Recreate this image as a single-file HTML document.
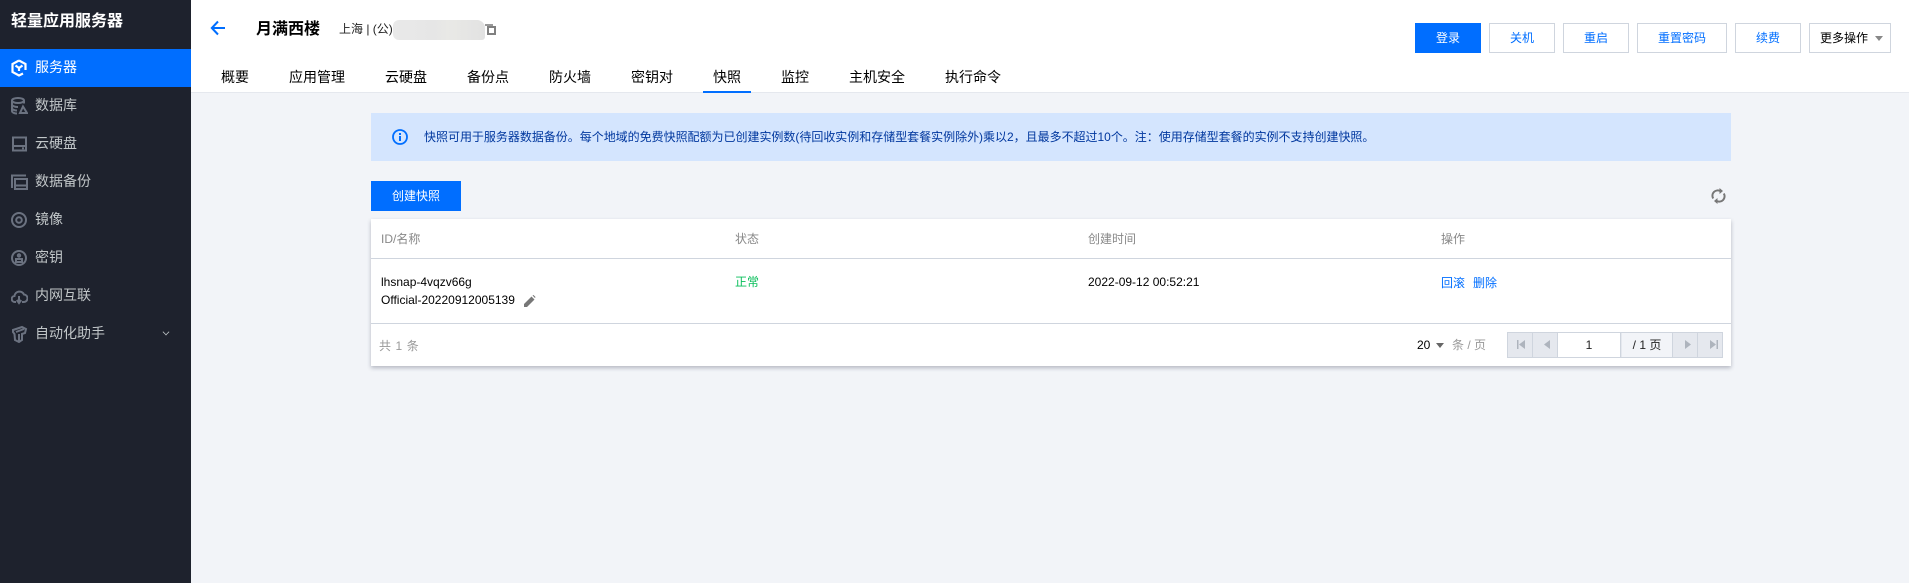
<!DOCTYPE html>
<html lang="zh-CN"><head><meta charset="utf-8"><title>快照</title>
<style>
*{box-sizing:border-box;margin:0;padding:0}
html,body{width:1909px;height:583px;overflow:hidden;background:#f2f4f8;font-family:"Liberation Sans","Noto Sans CJK SC",sans-serif;font-size:12px;color:#000}
.a{position:absolute;white-space:nowrap}
#side{left:0;top:0;width:191px;height:583px;background:#1e222d}
.logo{left:11px;top:10px;line-height:24px;font-size:16px;font-weight:700;color:#fff}
.mi{left:0;width:191px;height:38px;line-height:36px;padding-left:35px;font-size:14px;color:#c1c6c8}
.mi.on{background:#006eff;color:#fff}
.mi svg{position:absolute;left:11px;top:10px;fill:none;stroke:#6b7280;stroke-width:2}
.mi.on svg{stroke:#fff;stroke-width:2.2}
#hd{left:191px;top:0;width:1718px;height:93px;background:#fff;border-bottom:1px solid #e5e8ee}
.tab{top:66px;line-height:22px;font-size:14px;color:#000}
.btn{top:23px;height:30px;line-height:28px;text-align:center;border:1px solid #cfd5de;background:#fff;color:#006eff;font-size:12px}
.pri{background:#006eff;border-color:#006eff;color:#fff}
#alert{left:371px;top:113px;width:1360px;height:48px;background:#d4e5fe}
#card{left:371px;top:219px;width:1360px;height:147px;background:#fff;box-shadow:0 2px 4px rgba(54,58,80,.32)}
.ln{left:371px;width:1360px;height:1px;background:#cfd5de}
.th{top:230px;line-height:18px;color:#888}
.t{line-height:18px;color:#000}
.pg{top:332px;height:26px;border:1px solid #cfd5de;background:#e5e8ee}
</style></head><body>

<div class="a" id="side"></div>
<div class="a logo">轻量应用服务器</div>

<div class="a mi on" style="top:49px"><svg width="16" height="18" viewBox="0 0 16 18"><path d="M8 1.500 14.500 5v6"/><path d="M8 1.500 1.500 5v8L8 16.500l4-2"/><path d="M4.500 6.500 8 9l3.500-2.500M8 9v3"/></svg>服务器</div>
<div class="a mi" style="top:87px"><svg width="17" height="18" viewBox="0 0 17 18"><ellipse cx="7" cy="3.500" rx="6" ry="2.500"/><path d="M1 3.500V14c0 1.500 2.500 2.500 5 2.500M13 3.500v3M1 7.500c0 1.500 3 2.500 6 2.500M1 11c0 1.500 2.500 2.500 5 2.500"/><path d="M12 9.500l4 6.500H9z"/></svg>数据库</div>
<div class="a mi" style="top:125px"><svg width="16" height="18" viewBox="0 0 16 18"><path d="M2 2.500h13v13H2zM2 11h13"/><path d="M11 13.300h2"/></svg>云硬盘</div>
<div class="a mi" style="top:163px"><svg width="17" height="18" viewBox="0 0 17 18"><path d="M1 15V2.500h14"/><path d="M4 6h12v10H4zM4 12.500h12"/></svg>数据备份</div>
<div class="a mi" style="top:201px"><svg width="17" height="18" viewBox="0 0 17 18"><circle cx="8" cy="9" r="7"/><circle cx="8" cy="9" r="2.800"/></svg>镜像</div>
<div class="a mi" style="top:239px"><svg width="17" height="18" viewBox="0 0 17 18"><circle cx="8" cy="9" r="7"/><circle cx="8" cy="6.500" r="1.200"/><path d="M5 13V10h6v3z"/></svg>密钥</div>
<div class="a mi" style="top:277px"><svg width="17" height="18" viewBox="0 0 17 18"><path d="M5 15H4a3 3 0 0 1-.5-6A5 5 0 0 1 13 7.500 3.700 3.700 0 0 1 12.500 15H11"/><path d="M8 9v7M5.800 13 8 16l2.200-3"/></svg>内网互联</div>
<div class="a mi" style="top:315px"><svg width="17" height="18" viewBox="0 0 17 18"><path d="M2 5 11 2l4 2-1 4-3 1v6l-3 2-4-2-.5-6L2 7z"/><path d="M5 7l8-3M8 9v7"/></svg>自动化助手<span class="a" style="left:163px;top:14px;width:6px;height:6px;border:solid #c1c6c8;border-width:0 0 1.500px 1.500px;transform:rotate(-45deg) scale(.8)"></span></div>

<div class="a" id="hd"></div>
<svg class="a" style="left:210px;top:20px" width="16" height="16" viewBox="0 0 16 16" fill="none" stroke="#006eff" stroke-width="2"><path d="M15 8H2M8 1.500 1.800 8 8 14.500"/></svg>
<div class="a" style="left:256px;top:18px;line-height:24px;font-size:16px;font-weight:700">月满西楼</div>
<div class="a" style="left:339px;top:20px;line-height:18px;font-size:12px;color:#222">上海 | (公)</div>
<div class="a" style="left:485px;top:24px;width:8px;height:2px;background:#999"></div>
<div class="a" style="left:487px;top:26px;width:9px;height:9px;border:2px solid #808080;background:#fff"></div>
<div class="a" style="left:393px;top:20px;width:92px;height:20px;border-radius:6px 8px 3px 6px;background:linear-gradient(90deg,#e9e9e9,#e6e6e6 45%,#e9e9e6 60%,#e2e2e2)"></div>

<div class="a tab" style="left:221px">概要</div>
<div class="a tab" style="left:289px">应用管理</div>
<div class="a tab" style="left:385px">云硬盘</div>
<div class="a tab" style="left:467px">备份点</div>
<div class="a tab" style="left:549px">防火墙</div>
<div class="a tab" style="left:631px">密钥对</div>
<div class="a tab" style="left:713px">快照</div>
<div class="a" style="left:703px;top:91px;width:48px;height:2px;background:#006eff"></div>
<div class="a tab" style="left:781px">监控</div>
<div class="a tab" style="left:849px">主机安全</div>
<div class="a tab" style="left:945px">执行命令</div>

<div class="a btn pri" style="left:1415px;width:66px">登录</div>
<div class="a btn" style="left:1489px;width:66px">关机</div>
<div class="a btn" style="left:1563px;width:66px">重启</div>
<div class="a btn" style="left:1637px;width:90px">重置密码</div>
<div class="a btn" style="left:1735px;width:66px">续费</div>
<div class="a btn" style="left:1809px;width:82px;color:#000;text-align:left;padding-left:10px">更多操作</div>
<div class="a" style="left:1875px;top:36px;border:4px solid transparent;border-top:5px solid #888;border-bottom:0"></div>

<div class="a" id="alert"></div>
<svg class="a" style="left:392px;top:129px" width="16" height="16" viewBox="0 0 16 16"><circle cx="8" cy="8" r="7" fill="none" stroke="#006eff" stroke-width="1.800"/><rect x="7" y="7" width="2" height="5" fill="#006eff"/><rect x="7" y="4" width="2" height="2" fill="#006eff"/></svg>
<div class="a" style="left:424px;top:128px;line-height:18px;color:#00379e;letter-spacing:-.02px">快照可用于服务器数据备份。每个地域的免费快照配额为已创建实例数(待回收实例和存储型套餐实例除外)乘以2，且最多不超过10个。注：使用存储型套餐的实例不支持创建快照。</div>

<div class="a btn pri" style="left:371px;top:181px;width:90px">创建快照</div>
<svg class="a" style="left:1711px;top:188px" width="15" height="16" viewBox="0 0 15 16" fill="none" stroke="#777" stroke-width="2"><path d="M2.200 10.500A5.300 5.300 0 0 1 9.500 3.200"/><path d="M12.800 5.500A5.300 5.300 0 0 1 5.500 12.800"/><path d="M8.500 0 12 3 8.500 6z M6.500 10 3 13l3.500 3z" fill="#777" stroke="none"/></svg>

<div class="a" id="card"></div>
<div class="a ln" style="top:258px"></div>
<div class="a ln" style="top:323px"></div>
<div class="a th" style="left:381px">ID/名称</div>
<div class="a th" style="left:735px">状态</div>
<div class="a th" style="left:1088px">创建时间</div>
<div class="a th" style="left:1441px">操作</div>
<div class="a t" style="left:381px;top:273px">lhsnap-4vqzv66g</div>
<div class="a t" style="left:381px;top:291px">Official-20220912005139</div>
<svg class="a" style="left:524px;top:295px" width="12" height="12" viewBox="0 0 12 12"><path d="M0 12V9L7.500 1.500l3 3L3 12zM8.500.5l1-.5 2 2-.5 1z" fill="#777"/></svg>
<div class="a t" style="left:735px;top:273px;color:#0abf5b">正常</div>
<div class="a t" style="left:1088px;top:273px">2022-09-12 00:52:21</div>
<div class="a t" style="left:1441px;top:274px;color:#006eff">回滚</div>
<div class="a t" style="left:1473px;top:274px;color:#006eff">删除</div>

<div class="a t" style="left:379px;top:337px;color:#999;letter-spacing:.6px">共 1 条</div>
<div class="a t" style="left:1417px;top:336px">20</div>
<div class="a" style="left:1436px;top:343px;border:4px solid transparent;border-top:5px solid #666;border-bottom:0"></div>
<div class="a t" style="left:1452px;top:336px;color:#999">条 / 页</div>

<div class="a pg" style="left:1507px;width:216px"></div>
<div class="a" style="left:1532px;top:332px;width:1px;height:26px;background:#cfd5de"></div>
<div class="a" style="left:1557px;top:333px;width:64px;height:24px;background:#fff;border-right:1px solid #cfd5de;border-left:1px solid #cfd5de;text-align:center;line-height:24px;color:#222">1</div>
<div class="a" style="left:1622px;top:333px;width:50px;height:24px;background:#f2f4f8;text-align:center;line-height:24px;color:#222">/ 1 页</div>
<div class="a" style="left:1672px;top:332px;width:1px;height:26px;background:#cfd5de"></div>
<div class="a" style="left:1697px;top:332px;width:1px;height:26px;background:#cfd5de"></div>
<svg class="a" style="left:1507px;top:332px" width="216" height="26" viewBox="0 0 216 26" fill="#aeb4bd"><path d="M10 8h1.500v9H10zM18 8v9l-6-4.500z"/><path d="M43 8v9l-6-4.500z"/><path d="M178 8v9l6-4.500z"/><path d="M203 8v9l6-4.500zM209.500 8h1.500v9h-1.500z"/></svg>

</body></html>
